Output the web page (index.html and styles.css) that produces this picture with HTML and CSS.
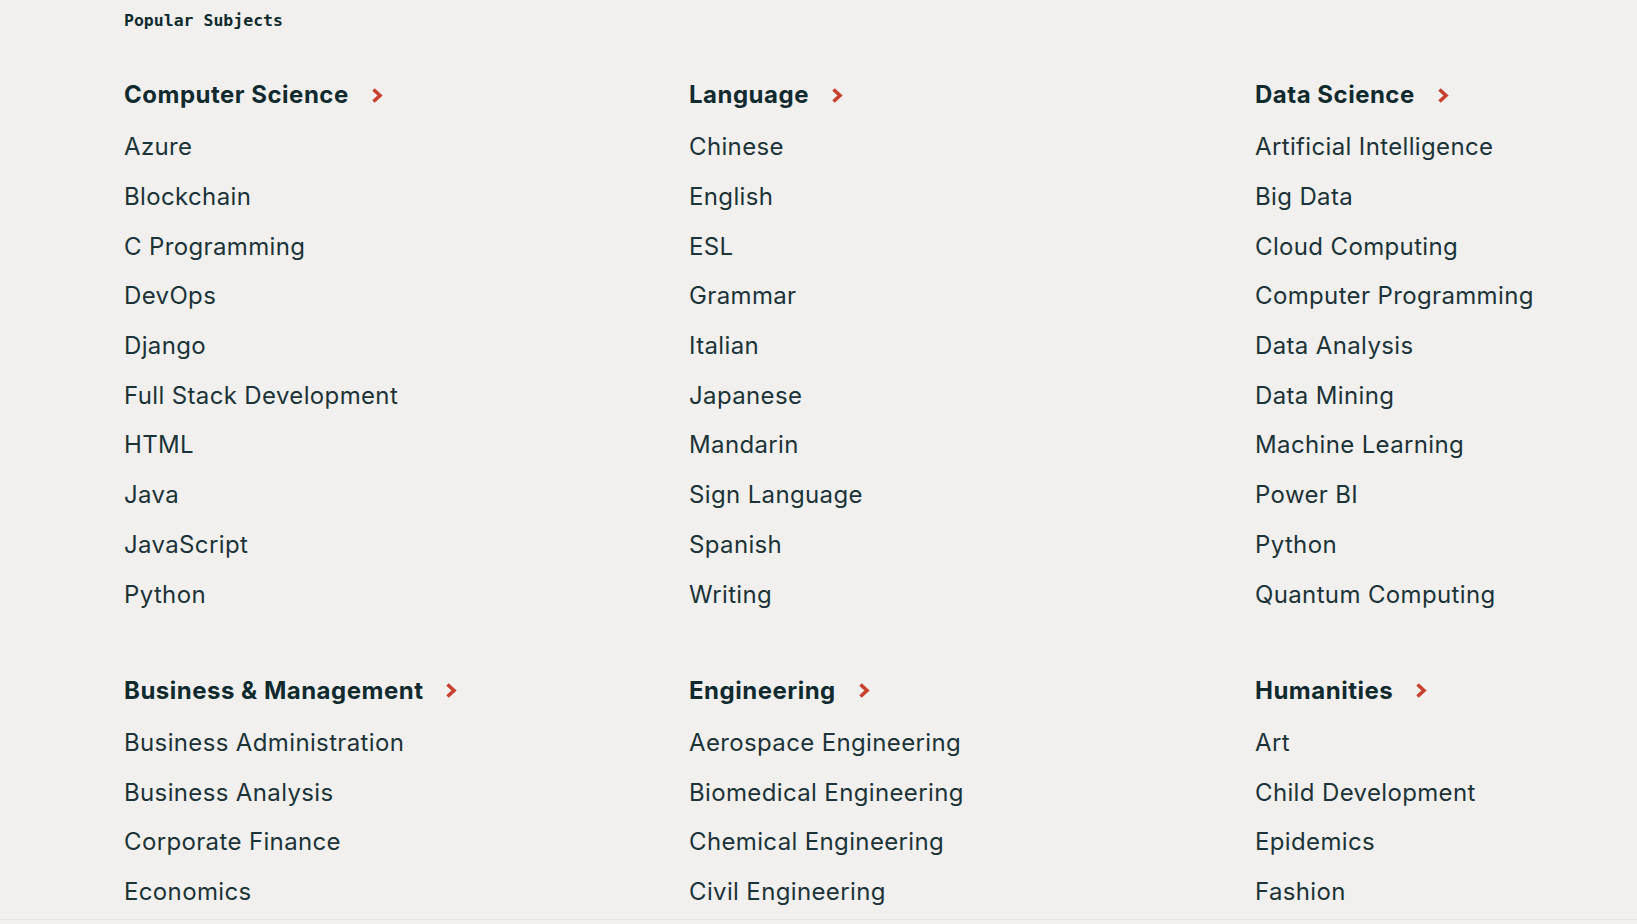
FILE: index.html
```html
<!DOCTYPE html>
<html lang="en">

<head>
    <meta charset="UTF-8">
    <meta name="viewport" content="width=device-width, initial-scale=1.0">
    <title>Popular Subjects</title>
    <link rel="stylesheet" href="styles.css">
</head>

<body>
    <div class="subjects">
        <p class="subjects__label">Popular Subjects</p>

        <div class="subjects__grid">
            <!-- Fila 1 -->
            <div class="group">
                <a class="group__title" href="#">Computer Science
                    <svg class="chevron" viewBox="0 0 12 17"><path d="M2.5 2.5 L9 8.5 L2.5 14.5" /></svg>
                </a>
                <ul class="group__list">
                    <li><a href="#">Azure</a></li>
                    <li><a href="#">Blockchain</a></li>
                    <li><a href="#">C Programming</a></li>
                    <li><a href="#">DevOps</a></li>
                    <li><a href="#">Django</a></li>
                    <li><a href="#">Full Stack Development</a></li>
                    <li><a href="#">HTML</a></li>
                    <li><a href="#">Java</a></li>
                    <li><a href="#">JavaScript</a></li>
                    <li><a href="#">Python</a></li>
                </ul>
            </div>

            <div class="group">
                <a class="group__title" href="#">Language
                    <svg class="chevron" viewBox="0 0 12 17"><path d="M2.5 2.5 L9 8.5 L2.5 14.5" /></svg>
                </a>
                <ul class="group__list">
                    <li><a href="#">Chinese</a></li>
                    <li><a href="#">English</a></li>
                    <li><a href="#">ESL</a></li>
                    <li><a href="#">Grammar</a></li>
                    <li><a href="#">Italian</a></li>
                    <li><a href="#">Japanese</a></li>
                    <li><a href="#">Mandarin</a></li>
                    <li><a href="#">Sign Language</a></li>
                    <li><a href="#">Spanish</a></li>
                    <li><a href="#">Writing</a></li>
                </ul>
            </div>

            <div class="group">
                <a class="group__title" href="#">Data Science
                    <svg class="chevron" viewBox="0 0 12 17"><path d="M2.5 2.5 L9 8.5 L2.5 14.5" /></svg>
                </a>
                <ul class="group__list">
                    <li><a href="#">Artificial Intelligence</a></li>
                    <li><a href="#">Big Data</a></li>
                    <li><a href="#">Cloud Computing</a></li>
                    <li><a href="#">Computer Programming</a></li>
                    <li><a href="#">Data Analysis</a></li>
                    <li><a href="#">Data Mining</a></li>
                    <li><a href="#">Machine Learning</a></li>
                    <li><a href="#">Power BI</a></li>
                    <li><a href="#">Python</a></li>
                    <li><a href="#">Quantum Computing</a></li>
                </ul>
            </div>

            <!-- Fila 2 -->
            <div class="group">
                <a class="group__title" href="#">Business &amp; Management
                    <svg class="chevron" viewBox="0 0 12 17"><path d="M2.5 2.5 L9 8.5 L2.5 14.5" /></svg>
                </a>
                <ul class="group__list">
                    <li><a href="#">Business Administration</a></li>
                    <li><a href="#">Business Analysis</a></li>
                    <li><a href="#">Corporate Finance</a></li>
                    <li><a href="#">Economics</a></li>
                </ul>
            </div>

            <div class="group">
                <a class="group__title" href="#">Engineering
                    <svg class="chevron" viewBox="0 0 12 17"><path d="M2.5 2.5 L9 8.5 L2.5 14.5" /></svg>
                </a>
                <ul class="group__list">
                    <li><a href="#">Aerospace Engineering</a></li>
                    <li><a href="#">Biomedical Engineering</a></li>
                    <li><a href="#">Chemical Engineering</a></li>
                    <li><a href="#">Civil Engineering</a></li>
                </ul>
            </div>

            <div class="group">
                <a class="group__title" href="#">Humanities
                    <svg class="chevron" viewBox="0 0 12 17"><path d="M2.5 2.5 L9 8.5 L2.5 14.5" /></svg>
                </a>
                <ul class="group__list">
                    <li><a href="#">Art</a></li>
                    <li><a href="#">Child Development</a></li>
                    <li><a href="#">Epidemics</a></li>
                    <li><a href="#">Fashion</a></li>
                </ul>
            </div>
        </div>
    </div>
</body>

</html>
```

FILE: styles.css
```css
/* Estilos generales */
body {
    background: #f1f0ee;
    margin: 0;
    font-family: Inter, "Noto Sans", sans-serif;
    color: #1c3338;
    height: 100vh;
    overflow: hidden;
}

a {
    color: inherit;
    text-decoration: none;
}

.subjects {
    padding: 9px 0 0 124px;
    height: 910px;
    border-bottom: 1px solid #e6e5e3;
}

.subjects__label {
    margin: 0;
    font-family: "DejaVu Sans Mono", "Liberation Mono", monospace;
    font-size: 16.5px;
    font-weight: bold;
    line-height: 24px;
    color: #102a2e;
}

/* Rejilla de materias */
.subjects__grid {
    display: grid;
    grid-template-columns: 565px 566px 1fr;
    row-gap: 53.6px;
    margin-top: 44px;
}

.group__title {
    display: flex;
    align-items: center;
    gap: 22px;
    font-size: 24px;
    font-weight: 700;
    letter-spacing: 0.5px;
    line-height: 36px;
    color: #102a2e;
}

.chevron {
    width: 12px;
    height: 17px;
    fill: none;
    stroke: #c8412f;
    stroke-width: 3.6;
}

.group__list {
    list-style: none;
    margin: 9.2px 0 0;
    padding: 0;
}

.group__list li {
    font-size: 24px;
    letter-spacing: 0.36px;
    line-height: 49.7px;
}
```
